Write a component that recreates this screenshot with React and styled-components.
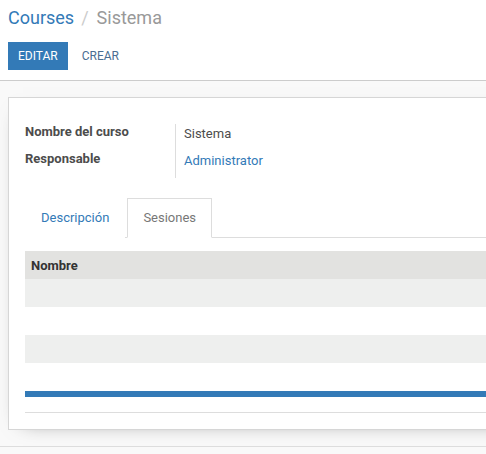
import React, { useState } from 'react'
import styled, { createGlobalStyle } from 'styled-components'

const GlobalStyle = createGlobalStyle`
  html, body {
    margin: 0;
    padding: 0;
    background: #f9f9f9;
    overflow: hidden;
  }
  body {
    font-family: Roboto, "Liberation Sans", sans-serif;
    font-size: 13px;
    color: #4c4c4c;
  }
`

const sessions = [{ id: 1 }, { id: 2 }, { id: 3 }, { id: 4 }]

const App = () => {
  const [tab, setTab] = useState('sesiones')

  return (
    <>
      <GlobalStyle />
      <ControlPanel>
        <Breadcrumb>
          <Crumb href="#">Courses</Crumb>
          <Slash>/</Slash>
          <Current>Sistema</Current>
        </Breadcrumb>
        <Buttons>
          <Button primary>Editar</Button>
          <Button>Crear</Button>
        </Buttons>
      </ControlPanel>

      <SheetArea>
        <Sheet>
          <FieldGroup>
            <Label>Nombre del curso</Label>
            <Value>Sistema</Value>
            <Label>Responsable</Label>
            <Value link>Administrator</Value>
          </FieldGroup>

          <Tabs>
            <Tab active={tab === 'descripcion'} onClick={() => setTab('descripcion')}>
              Descripción
            </Tab>
            <Tab active={tab === 'sesiones'} onClick={() => setTab('sesiones')}>
              Sesiones
            </Tab>
          </Tabs>

          <Table>
            <thead>
              <tr>
                <HeaderCell>Nombre</HeaderCell>
              </tr>
            </thead>
            <tbody>
              {sessions.map((s, i) => (
                <Row key={s.id} striped={i % 2 === 0}>
                  <Cell />
                </Row>
              ))}
            </tbody>
          </Table>
          <ProgressBar />
          <Footer />
        </Sheet>
      </SheetArea>
    </>
  )
}

const ControlPanel = styled.div`
  background: #fff;
  border-bottom: 1px solid #ccc;
  padding: 8px 8px 10px;
`

const Breadcrumb = styled.div`
  display: flex;
  align-items: baseline;
  font-size: 18px;
  line-height: 20px;
`

const Crumb = styled.a`
  color: #337ab7;
  text-decoration: none;
`

const Slash = styled.span`
  color: #ccc;
  padding: 0 8px 0 7px;
`

const Current = styled.span`
  color: #999;
`

const Buttons = styled.div`
  display: flex;
  gap: 2px;
  margin-top: 14px;
`

const Button = styled.button`
  height: 28px;
  padding: 0 ${({ primary }) => (primary ? '10px' : '12px')};
  border: none;
  border-radius: 0;
  font-family: inherit;
  font-size: 12px;
  text-transform: uppercase;
  cursor: pointer;
  background: ${({ primary }) => (primary ? '#337ab7' : 'transparent')};
  color: ${({ primary }) => (primary ? '#fff' : '#4a6d92')};
`

const SheetArea = styled.div`
  padding: 16px 0 16px 8px;
  border-bottom: 1px solid #ddd;
  overflow: hidden;
`

const Sheet = styled.div`
  width: 800px;
  background: #fff;
  border: 1px solid #d6d6d6;
  box-shadow: 0 5px 20px -15px rgba(0, 0, 0, 0.6);
  padding: 26px 16px 16px;
`

const FieldGroup = styled.div`
  display: grid;
  grid-template-columns: 151px 1fr;
`

const Label = styled.div`
  font-weight: bold;
  color: #4c4c4c;
  line-height: 16px;
  height: 27px;
  border-right: 1px solid #ddd;
`

const Value = styled.div`
  line-height: 20px;
  height: 27px;
  padding-left: 8px;
  color: ${({ link }) => (link ? '#337ab7' : '#4c4c4c')};
`

const Tabs = styled.div`
  display: flex;
  margin-top: 20px;
  border-bottom: 1px solid #ddd;
`

const Tab = styled.div`
  margin-bottom: -1px;
  margin-right: 2px;
  padding: 10px 15px;
  line-height: 18px;
  cursor: pointer;
  border: 1px solid ${({ active }) => (active ? '#ddd' : 'transparent')};
  border-bottom-color: ${({ active }) => (active ? '#fff' : 'transparent')};
  background: #fff;
  color: ${({ active }) => (active ? '#777' : '#337ab7')};
`

const Table = styled.table`
  width: 100%;
  border-collapse: collapse;
  margin-top: 13px;
`

const HeaderCell = styled.th`
  height: 28px;
  padding: 0 6px;
  text-align: left;
  font-weight: bold;
  color: #333;
  background: #e2e2e0;
`

const Row = styled.tr`
  background: ${({ striped }) => (striped ? '#eeefee' : '#fff')};
`

const Cell = styled.td`
  height: 28px;
  padding: 0;
`

const ProgressBar = styled.div`
  height: 6px;
  background: #337ab7;
`

const Footer = styled.div`
  height: 15px;
  border-bottom: 1px solid #ddd;
`

export default App
